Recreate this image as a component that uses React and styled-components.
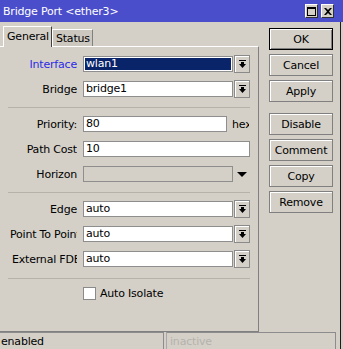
import styled, { createGlobalStyle } from "styled-components";

const GlobalStyle = createGlobalStyle`
html, body {
  margin: 0;
  padding: 0;
  background: #d4d0c8;
}
body {
  font-family: "DejaVu Sans", "Liberation Sans", sans-serif;
  font-size: 11px;
  letter-spacing: -0.2px;
  color: #000;
}
`;

const Window = styled.div`
width: 343px;
height: 349px;
display: flex;
flex-direction: column;
overflow: hidden;
`;

const TitleBar = styled.div`
height: 22px;
flex-shrink: 0;
background: #4a4ecb;
color: #fff;
display: flex;
align-items: center;
justify-content: space-between;
padding: 0 9px 0 3px;
box-sizing: border-box;
font-size: 11px;
`;

const TitleButtons = styled.div`
display: flex;
gap: 3px;
`;

const TitleButton = styled.div`
width: 13px;
height: 14px;
box-sizing: border-box;
background: #d4d0c8;
border: 1px solid;
border-color: #fff #303030 #303030 #fff;
display: flex;
align-items: center;
justify-content: center;
`;

const Frame = styled.div`
flex: 1;
width: 341px;
display: flex;
flex-direction: column;
border-right: 1px solid #1e1e1e;
box-sizing: border-box;
`;

const Body = styled.div`
flex: 1;
display: flex;
`;

const TabArea = styled.div`
width: 259px;
display: flex;
flex-direction: column;
padding-top: 4px;
`;

const TabRow = styled.div`
display: flex;
align-items: flex-end;
height: 20px;
padding-left: 3px;
`;

const Tab = styled.div`
box-sizing: border-box;
height: ${(p) => (p.$active ? "21px" : "17px")};
margin-bottom: ${(p) => (p.$active ? "-1px" : "0")};
padding: ${(p) => (p.$active ? "3px 2px 0 3px" : "2px 2px 0 3px")};
line-height: 14px;
background: ${(p) => (p.$active ? "#d4d0c8" : "#ccc8c0")};
border: 1px solid;
border-bottom: none;
border-color: #fff ${(p) => (p.$active ? "#404040" : "#808080")} transparent #fff;
position: relative;
z-index: ${(p) => (p.$active ? 1 : 0)};
`;

const Panel = styled.div`
flex: 1;
border-top: 1px solid #fff;
border-right: 1px solid #808080;
border-bottom: 1px solid #808080;
display: flex;
flex-direction: column;
gap: 7px;
padding-top: 8px;
`;

const Row = styled.div`
display: flex;
align-items: center;
height: 18px;
padding-right: 8px;
`;

const Label = styled.div`
width: 77px;
box-sizing: border-box;
padding-left: ${(p) => p.$inset || 0}px;
margin-right: 6px;
text-align: right;
white-space: nowrap;
overflow: hidden;
flex-shrink: 0;
color: ${(p) => (p.$link ? "#2b2be6" : "#000")};
`;

const Field = styled.div`
box-sizing: border-box;
height: 16px;
width: ${(p) => (p.$width ? `${p.$width}px` : "auto")};
flex: ${(p) => (p.$width ? "none" : 1)};
border: 1px solid #8e8e8e;
background: ${(p) => (p.$selected ? "#0a246a" : p.$disabled ? "#d4d0c8" : "#fff")};
box-shadow: ${(p) => (p.$selected ? "inset 0 0 0 1px #fff" : "none")};
color: ${(p) => (p.$selected ? "#fff" : "#000")};
padding-left: 2px;
line-height: 14px;
white-space: nowrap;
overflow: hidden;
`;

const DropButton = styled.div`
width: 16px;
height: 18px;
box-sizing: border-box;
margin-left: 1px;
border: 1px solid #8a8a8a;
box-shadow: inset 1px 1px #fff;
background: #d4d0c8;
display: flex;
align-items: center;
justify-content: center;
`;

const PlainArrow = styled.div`
width: 17px;
display: flex;
justify-content: center;
`;

const Unit = styled.div`
margin-left: 5px;
width: 17px;
overflow: hidden;
white-space: nowrap;
`;

const Divider = styled.div`
height: 1px;
margin: ${(p) => p.$top || 2}px 8px 0 8px;
background: #b6b2aa;
`;

const CheckRow = styled.div`
display: flex;
align-items: center;
padding-left: 83px;
height: 14px;
`;

const CheckBox = styled.div`
width: 13px;
height: 13px;
box-sizing: border-box;
border: 1px solid #8a8a8a;
background: #fff;
margin-right: 4px;
`;

const Side = styled.div`
display: flex;
flex-direction: column;
gap: 4px;
padding: 6px 0 0 10px;
`;

const Button = styled.div`
width: 64px;
height: 22px;
box-sizing: border-box;
border: 1px solid ${(p) => (p.$default ? "#000" : "#808080")};
box-shadow: ${(p) =>
  p.$default ? "inset 1px 1px #fff, inset -1px -1px #808080" : "inset 1px 1px #fff"};
background: #d4d0c8;
display: flex;
align-items: center;
justify-content: center;
margin-bottom: ${(p) => (p.$groupEnd ? "7px" : "0")};
`;

const StatusBar = styled.div`
height: 17px;
display: flex;
flex-shrink: 0;
`;

const StatusCell = styled.div`
box-sizing: border-box;
width: ${(p) => p.$width}px;
margin-left: ${(p) => p.$offset || 0}px;
border-top: 1px solid #8c8c8c;
border-right: 1px solid #8c8c8c;
border-left: ${(p) => (p.$offset ? "1px solid #a8a8a8" : "none")};
padding: 2px 0 0 ${(p) => (p.$offset ? 3 : 1)}px;
line-height: 14px;
color: ${(p) => (p.$dim ? "#b4b2ac" : "#000")};
white-space: nowrap;
overflow: hidden;
`;

const DropIcon = () => (
  <svg width="7" height="8" viewBox="0 0 7 8">
    <rect x="0" y="0" width="7" height="1" fill="#000" />
    <rect x="2" y="2" width="3" height="2" fill="#000" />
    <polygon points="0,4 7,4 3.5,8" fill="#000" />
  </svg>
);

const Dropdown = ({ label, value, link, inset, selected }) => (
  <Row>
    <Label $link={link} $inset={inset}>{label}</Label>
    <Field $width={150} $selected={selected}>{value}</Field>
    <DropButton>
      <DropIcon />
    </DropButton>
  </Row>
);

const App = () => {
  return (
    <>
      <GlobalStyle />
      <Window>
        <TitleBar>
          <span>Bridge Port &lt;ether3&gt;</span>
          <TitleButtons>
            <TitleButton>
              <svg width="9" height="9" viewBox="0 0 9 9">
                <rect x="0.5" y="0.5" width="8" height="8" fill="none" stroke="#000" />
                <rect x="0" y="0" width="9" height="2" fill="#000" />
              </svg>
            </TitleButton>
            <TitleButton>
              <svg width="8" height="7" viewBox="0 0 8 7">
                <path d="M0 0 L2 0 L4 2 L6 0 L8 0 L5 3.5 L8 7 L6 7 L4 5 L2 7 L0 7 L3 3.5 Z" fill="#000" />
              </svg>
            </TitleButton>
          </TitleButtons>
        </TitleBar>
        <Frame>
          <Body>
            <TabArea>
              <TabRow>
                <Tab $active>General</Tab>
                <Tab>Status</Tab>
              </TabRow>
              <Panel>
                <Dropdown label="Interface" value="wlan1" link selected />
                <Dropdown label="Bridge" value="bridge1" />
                <Divider />
                <Row>
                  <Label>Priority:</Label>
                  <Field $width={144}>80</Field>
                  <Unit>hex</Unit>
                </Row>
                <Row>
                  <Label>Path Cost</Label>
                  <Field>10</Field>
                </Row>
                <Row>
                  <Label>Horizon</Label>
                  <Field $width={150} $disabled />
                  <PlainArrow>
                    <svg width="10" height="5" viewBox="0 0 10 5">
                      <polygon points="0,0 10,0 5,5" fill="#000" />
                    </svg>
                  </PlainArrow>
                </Row>
                <Divider />
                <Dropdown label="Edge" value="auto" />
                <Dropdown label="Point To Point" value="auto" inset={10} />
                <Dropdown label="External FDB" value="auto" inset={12} />
                <Divider $top={3} />
                <CheckRow>
                  <CheckBox />
                  Auto Isolate
                </CheckRow>
              </Panel>
            </TabArea>
            <Side>
              <Button $default>OK</Button>
              <Button>Cancel</Button>
              <Button $groupEnd>Apply</Button>
              <Button>Disable</Button>
              <Button>Comment</Button>
              <Button>Copy</Button>
              <Button>Remove</Button>
            </Side>
          </Body>
          <StatusBar>
            <StatusCell $width={164}>enabled</StatusCell>
            <StatusCell $width={170} $offset={2} $dim>inactive</StatusCell>
          </StatusBar>
        </Frame>
      </Window>
    </>
  );
};

export default App;
